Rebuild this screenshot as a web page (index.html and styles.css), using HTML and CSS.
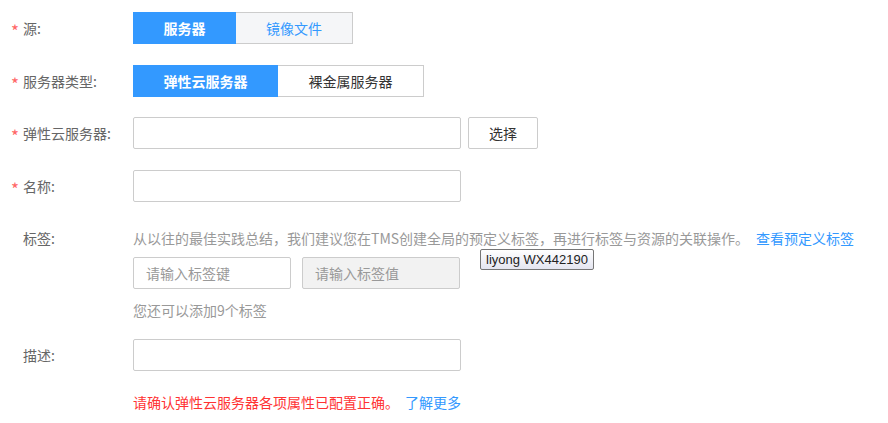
FILE: index.html
```html
<!DOCTYPE html>
<html lang="zh-CN">
<head>
<meta charset="UTF-8">
<title>创建</title>
<link rel="stylesheet" href="styles.css">
</head>
<body>
<div class="form">
    <div class="row row-src">
        <div class="label"><span class="req">*</span>源:</div>
        <div class="toggle">
            <span class="tbtn on w-a">服务器</span>
            <span class="tbtn off-grey w-b">镜像文件</span>
        </div>
    </div>
    <div class="row row-type">
        <div class="label"><span class="req">*</span>服务器类型:</div>
        <div class="toggle">
            <span class="tbtn on w-c">弹性云服务器</span>
            <span class="tbtn off w-d">裸金属服务器</span>
        </div>
    </div>
    <div class="row row-ecs">
        <div class="label"><span class="req">*</span>弹性云服务器:</div>
        <input class="field" type="text">
        <button class="pick">选择</button>
    </div>
    <div class="row row-name">
        <div class="label"><span class="req">*</span>名称:</div>
        <input class="field" type="text">
    </div>
    <div class="row row-tags">
        <div class="label">标签:</div>
        <div class="tags">
            <p class="tip">从以往的最佳实践总结，我们建议您在TMS创建全局的预定义标签，再进行标签与资源的关联操作。<a class="link" href="#">查看预定义标签</a></p>
            <div class="tag-inputs">
                <input class="tag-field" type="text" placeholder="请输入标签键">
                <input class="tag-field disabled" type="text" placeholder="请输入标签值">
            </div>
            <p class="tip hint">您还可以添加9个标签</p>
        </div>
    </div>
    <div class="row row-desc">
        <div class="label">描述:</div>
        <input class="field" type="text">
    </div>
    <div class="row row-warn">
        <div class="label"></div>
        <p class="warn">请确认弹性云服务器各项属性已配置正确。<a class="link more" href="#">了解更多</a></p>
    </div>
</div>
<div class="tooltip">liyong WX442190</div>
</body>
</html>
```

FILE: styles.css
```css
body { margin: 0; font-family: "Noto Sans CJK SC", "Liberation Sans", sans-serif; font-size: 14px; color: #666; background: #fff; position: relative; width: 888px; height: 423px; overflow: hidden; }
.form { padding-top: 12px; }
.row { display: flex; align-items: center; }
.row-src { margin-bottom: 21px; }
.row-type { margin-bottom: 20px; }
.row-ecs { margin-bottom: 21px; }
.row-name { margin-bottom: 26px; }
.label { width: 122px; padding-left: 11px; flex: none; line-height: 20px; color: #666; white-space: nowrap; }
.req { color: #f66; display: inline-block; width: 12px; font-size: 17px; line-height: 14px; vertical-align: -4px; }
.row-tags .label, .row-desc .label { padding-left: 23px; width: 110px; }
.row-tags { align-items: flex-start; margin-bottom: 19px; }
.toggle { display: flex; }
.tbtn { height: 32px; box-sizing: border-box; display: flex; align-items: center; justify-content: center; border: 1px solid #ccc; }
.tbtn.on { background: #3399ff; border-color: #3399ff; color: #fff; font-weight: bold; }
.tbtn.off-grey { background: #f5f6f8; color: #3399ff; border-left: none; }
.tbtn.off { background: #fff; color: #333; border-left: none; }
.w-a { width: 103px; }
.w-b { width: 117px; }
.w-c { width: 145px; }
.w-d { width: 146px; }
.field { width: 328px; height: 32px; box-sizing: border-box; border: 1px solid #ccc; border-radius: 2px; margin: 0; padding: 0 10px; font: inherit; }
.pick { width: 70px; height: 32px; margin-left: 7px; border: 1px solid #ccc; border-radius: 2px; background: #fff; color: #333; font: inherit; padding: 0; }
.tags { display: flex; flex-direction: column; }
.tip { margin: 0; line-height: 20px; color: #999; white-space: nowrap; }
.link { color: #3399ff; text-decoration: none; margin-left: 7px; }
.tag-inputs { display: flex; gap: 11px; margin-top: 9px; }
.tag-field { width: 158px; height: 32px; box-sizing: border-box; border: 1px solid #ccc; border-radius: 2px; padding: 0 12px; margin: 0; font: inherit; }
.tag-field::placeholder { color: #999; }
.tag-field.disabled { background: #f2f2f2; }
.hint { margin-top: 11px; }
.row-desc { margin-bottom: 21px; }
.warn { margin: 0; line-height: 20px; color: #f33; }
.more { margin-left: 6px; }
.tooltip { position: absolute; left: 480px; top: 249px; height: 21px; box-sizing: border-box; padding: 0 5px; border: 1px solid #767676; border-radius: 2px; background: linear-gradient(#fff, #e4e5f0); color: #222; font-family: "Liberation Sans", sans-serif; font-size: 13px; line-height: 19px; }
```
